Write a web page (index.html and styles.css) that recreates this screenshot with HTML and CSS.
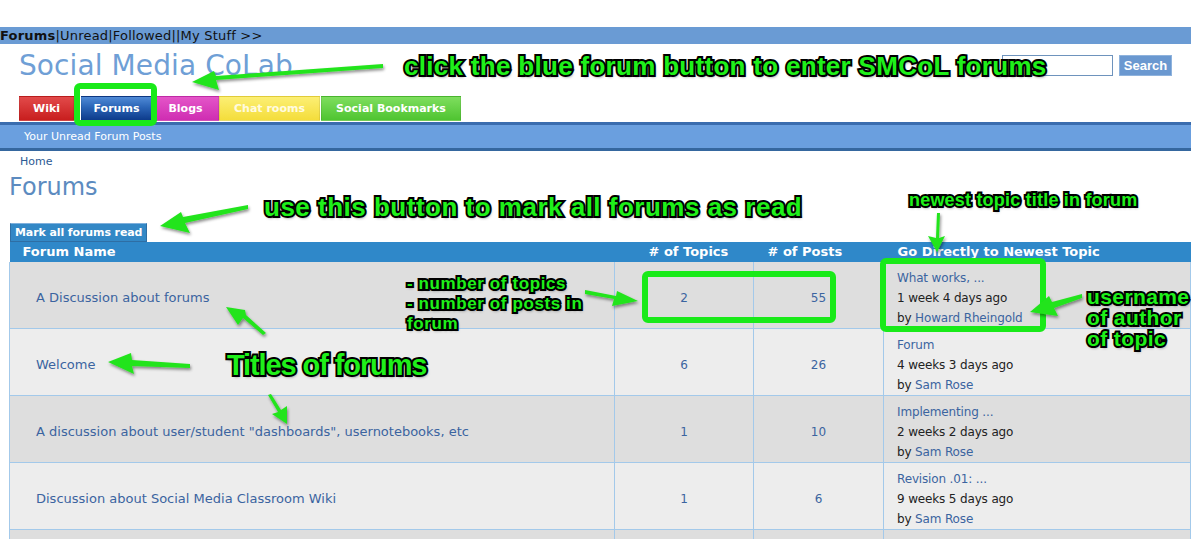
FILE: index.html
```html
<!DOCTYPE html>
<html lang="en">
<head>
<meta charset="utf-8">
<title>Forums | Social Media CoLab</title>
<link rel="stylesheet" href="styles.css">
</head>
<body>
<div class="page">
  <div class="topbar"><b>Forums</b>|Unread|Followed||My Stuff &gt;&gt;</div>
  <div class="header">
    <div class="site-title">Social Media CoLab</div>
    <form class="search">
      <input class="search-input" type="text">
      <button class="search-btn" type="button">Search</button>
    </form>
  </div>
  <div class="tabs">
    <span class="tab tab-wiki">Wiki</span>
    <span class="tab tab-forums">Forums</span>
    <span class="tab tab-blogs">Blogs</span>
    <span class="tab tab-chat">Chat rooms</span>
    <span class="tab tab-social">Social Bookmarks</span>
  </div>
  <div class="subnav">Your Unread Forum Posts</div>
  <div class="content">
    <div class="crumb">Home</div>
    <h1 class="page-title">Forums</h1>
    <button class="mark-btn" type="button">Mark all forums read</button>
    <table class="forums">
      <thead>
        <tr>
          <th class="c-name">Forum Name</th>
          <th class="c-topics">&#35; of Topics</th>
          <th class="c-posts">&#35; of Posts</th>
          <th class="c-last">Go Directly to Newest Topic</th>
        </tr>
      </thead>
      <tbody>
        <tr class="odd">
          <td class="c-name"><a>A Discussion about forums</a></td>
          <td class="num">2</td>
          <td class="num">55</td>
          <td class="c-last"><a>What works, ...</a><br>1 week 4 days ago<br>by <a>Howard Rheingold</a></td>
        </tr>
        <tr class="even">
          <td class="c-name"><a>Welcome</a></td>
          <td class="num">6</td>
          <td class="num">26</td>
          <td class="c-last"><a>Forum</a><br>4 weeks 3 days ago<br>by <a>Sam Rose</a></td>
        </tr>
        <tr class="odd">
          <td class="c-name"><a>A discussion about user/student "dashboards", usernotebooks, etc</a></td>
          <td class="num">1</td>
          <td class="num">10</td>
          <td class="c-last"><a>Implementing ...</a><br>2 weeks 2 days ago<br>by <a>Sam Rose</a></td>
        </tr>
        <tr class="even">
          <td class="c-name"><a>Discussion about Social Media Classroom Wiki</a></td>
          <td class="num">1</td>
          <td class="num">6</td>
          <td class="c-last"><a>Revision .01: ...</a><br>9 weeks 5 days ago<br>by <a>Sam Rose</a></td>
        </tr>
        <tr class="odd">
          <td class="c-name">&nbsp;</td>
          <td class="num">&nbsp;</td>
          <td class="num">&nbsp;</td>
          <td class="c-last">&nbsp;<br>&nbsp;<br>&nbsp;</td>
        </tr>
      </tbody>
    </table>
  </div>

  <svg class="marks" width="1191" height="539" viewBox="0 0 1191 539">
    <defs>
      <filter id="sh" x="-20%" y="-50%" width="140%" height="200%">
        <feDropShadow dx="1" dy="2" stdDeviation="1.5" flood-color="#000" flood-opacity="0.45"/>
      </filter>
    </defs>
    <g fill="none" stroke="#19ea19" stroke-width="6" stroke-linejoin="round">
      <rect x="77" y="86" width="77" height="37" rx="3"/>
      <rect x="645" y="274" width="188" height="46" rx="3"/>
      <rect x="883" y="261" width="160" height="68" rx="3"/>
    </g>
    <g fill="#22e41c" filter="url(#sh)">
      <polygon points="383,64 383,68 216,80 219,90 192,82 214,71 216,76"/>
      <polygon points="248,205 248,209 185,223 190,233 160,226 181,212 183,217"/>
      <polygon points="940,213 937,213 936,238 928,236 937,252 945,236 939,238"/>
      <polygon points="585,290 585,294 614,299 612,306 638,301 617,291 616,296"/>
      <polygon points="1082,294 1082,298 1054,308 1058,316 1030,312 1049,296 1052,302"/>
      <polygon points="190,364 190,368 132,366 134,374 108,362 131,353 132,360"/>
      <polygon points="266,333 263,335 243,318 238,325 226,307 245,310 246,315"/>
      <polygon points="268,395 271,394 281,410 287,406 287,424 272,414 278,412"/>
    </g>
  </svg>
  <div class="note note-forumbtn">click the blue forum button to enter SMCoL forums</div>
  <div class="note note-mark">use this button to mark all forums as read</div>
  <div class="note note-newest">newest topic title in forum</div>
  <div class="note note-count">- number of topics<br>- number of posts in<br>forum</div>
  <div class="note note-user">username<br>of author<br>of topic</div>
  <div class="note note-titles">Titles of forums</div>
</div>
</body>
</html>
```

FILE: styles.css
```css
* { box-sizing: border-box; }
html, body { margin: 0; padding: 0; background: #fff; }
body {
  font-family: "DejaVu Sans", Verdana, sans-serif;
  color: #222;
  overflow: hidden;
}
.page {
  position: relative;
  width: 1191px;
  height: 539px;
  padding-top: 27px;
  overflow: hidden;
}
.topbar {
  height: 17px;
  background: #6a9bd4;
  font-size: 13px;
  line-height: 17px;
  letter-spacing: 0.2px;
  color: #111;
  white-space: nowrap;
}
.topbar b { font-weight: bold; }
.header {
  height: 52px;
  display: flex;
  justify-content: space-between;
  align-items: flex-start;
  padding-left: 19px;
  padding-right: 19px;
}
.site-title {
  font-size: 28px;
  line-height: 34px;
  margin-top: 5px;
  letter-spacing: 0.1px;
  color: #6f9fd6;
}
.search {
  display: flex;
  gap: 6px;
  margin: 11px 0 0 0;
}
.search-input {
  width: 111px;
  height: 21px;
  border: 1px solid #6e93bd;
  margin: 0;
  padding: 0;
  background: #fff;
}
.search-btn {
  width: 53px;
  height: 21px;
  border: 1px solid #8fb3dd;
  background: #6a98d0;
  color: #fff;
  font-family: "Liberation Sans", Arial, sans-serif;
  font-weight: bold;
  font-size: 13px;
  padding: 0;
  margin: 0;
}
.tabs {
  display: flex;
  height: 25px;
  padding-left: 19px;
}
.tab {
  display: flex;
  align-items: center;
  justify-content: center;
  height: 25px;
  color: #fff;
  font-weight: bold;
  font-size: 11px;
  border: 1px solid rgba(0,0,0,0.08);
}
.tab-wiki { width: 55px; background: linear-gradient(#e24a4a, #c81e1e); margin-right: 7px; }
.tab-forums { width: 71px; background: linear-gradient(#4f8ad6 0%, #2a64b6 45%, #0d3b8b 100%); }
.tab-blogs { width: 67px; background: linear-gradient(#e455c8, #cf2db2); }
.tab-chat { width: 101px; background: linear-gradient(#fcef74, #f4dd3b); color: #fffbe0; }
.tab-social { width: 140px; background: linear-gradient(#7ede5e, #4fc431); margin-left: 1px; }
.subnav {
  margin-top: 1px;
  height: 29px;
  border-top: 3px solid #3a6cae;
  border-bottom: 3px solid #35679f;
  background: #6a9fdf;
  color: #fff;
  font-size: 11px;
  line-height: 24px;
  padding-left: 24px;
}
.content {
  padding: 0 0 0 9px;
}
.crumb {
  font-size: 11px;
  color: #2c5a93;
  padding-left: 11px;
  margin-top: 4px;
  line-height: 14px;
}
.page-title {
  margin: 4px 0 0 0;
  font-weight: normal;
  font-size: 24px;
  line-height: 28px;
  color: #5c8bc0;
}
.mark-btn {
  display: block;
  margin: 22px 0 0 1px;
  height: 19px;
  padding: 0 4px;
  border: 1px solid #2e6ea4;
  border-top-color: #7fb0dc;
  background: #3388c6;
  color: #fff;
  font-family: "DejaVu Sans", Verdana, sans-serif;
  font-weight: bold;
  font-size: 11px;
  line-height: 17px;
  letter-spacing: -0.1px;
}
.forums {
  width: 1182px;
  border-collapse: collapse;
  table-layout: fixed;
  font-size: 12px;
}
.forums th {
  background: #2f88c9;
  color: #fff;
  text-align: left;
  font-size: 13px;
  font-weight: bold;
  height: 20px;
  padding: 0;
  line-height: 20px;
}
th.c-name { width: 605px; padding-left: 13px; }
th.c-topics { width: 139px; padding-left: 34px; }
th.c-posts { width: 130px; padding-left: 14px; }
th.c-last { padding-left: 14px; }
.forums td {
  border: 1px solid #a3c9ea;
  border-top: 0;
  padding: 6px 0 0 0;
  line-height: 20px;
  height: 66px;
  vertical-align: middle;
}
.forums tr.odd td { background: #dedede; }
.forums tr.even td { background: #ededed; }
td.c-name { padding-left: 26px; font-size: 13px; }
td.num { text-align: center; color: #3b64a0; }
td.c-last { padding-left: 13px; color: #222; letter-spacing: -0.15px; }
.forums a { color: #3b64a0; text-decoration: none; }

.marks {
  position: absolute;
  left: 0;
  top: 0;
  pointer-events: none;
}
.note {
  position: absolute;
  font-family: "Liberation Sans", Arial, sans-serif;
  font-weight: bold;
  color: #1ff01a;
  -webkit-text-stroke: 4px #000;
  paint-order: stroke fill;
  text-shadow: 1px 2px 3px rgba(0,0,0,0.5);
  white-space: nowrap;
}
.note-forumbtn { left: 404px; top: 51px; font-size: 26px; letter-spacing: 0.3px; }
.note-mark { left: 264px; top: 192px; font-size: 26px; letter-spacing: 0.5px; }
.note-newest { left: 909px; top: 190px; font-size: 18px; letter-spacing: 0.2px; }
.note-count { left: 407px; top: 274px; font-size: 17px; line-height: 20px; letter-spacing: 0.6px; }
.note-user { left: 1087px; top: 286px; font-size: 21px; line-height: 21px; letter-spacing: 0.4px; }
.note-titles { left: 227px; top: 349px; font-size: 29px; letter-spacing: -1.1px; }
```
